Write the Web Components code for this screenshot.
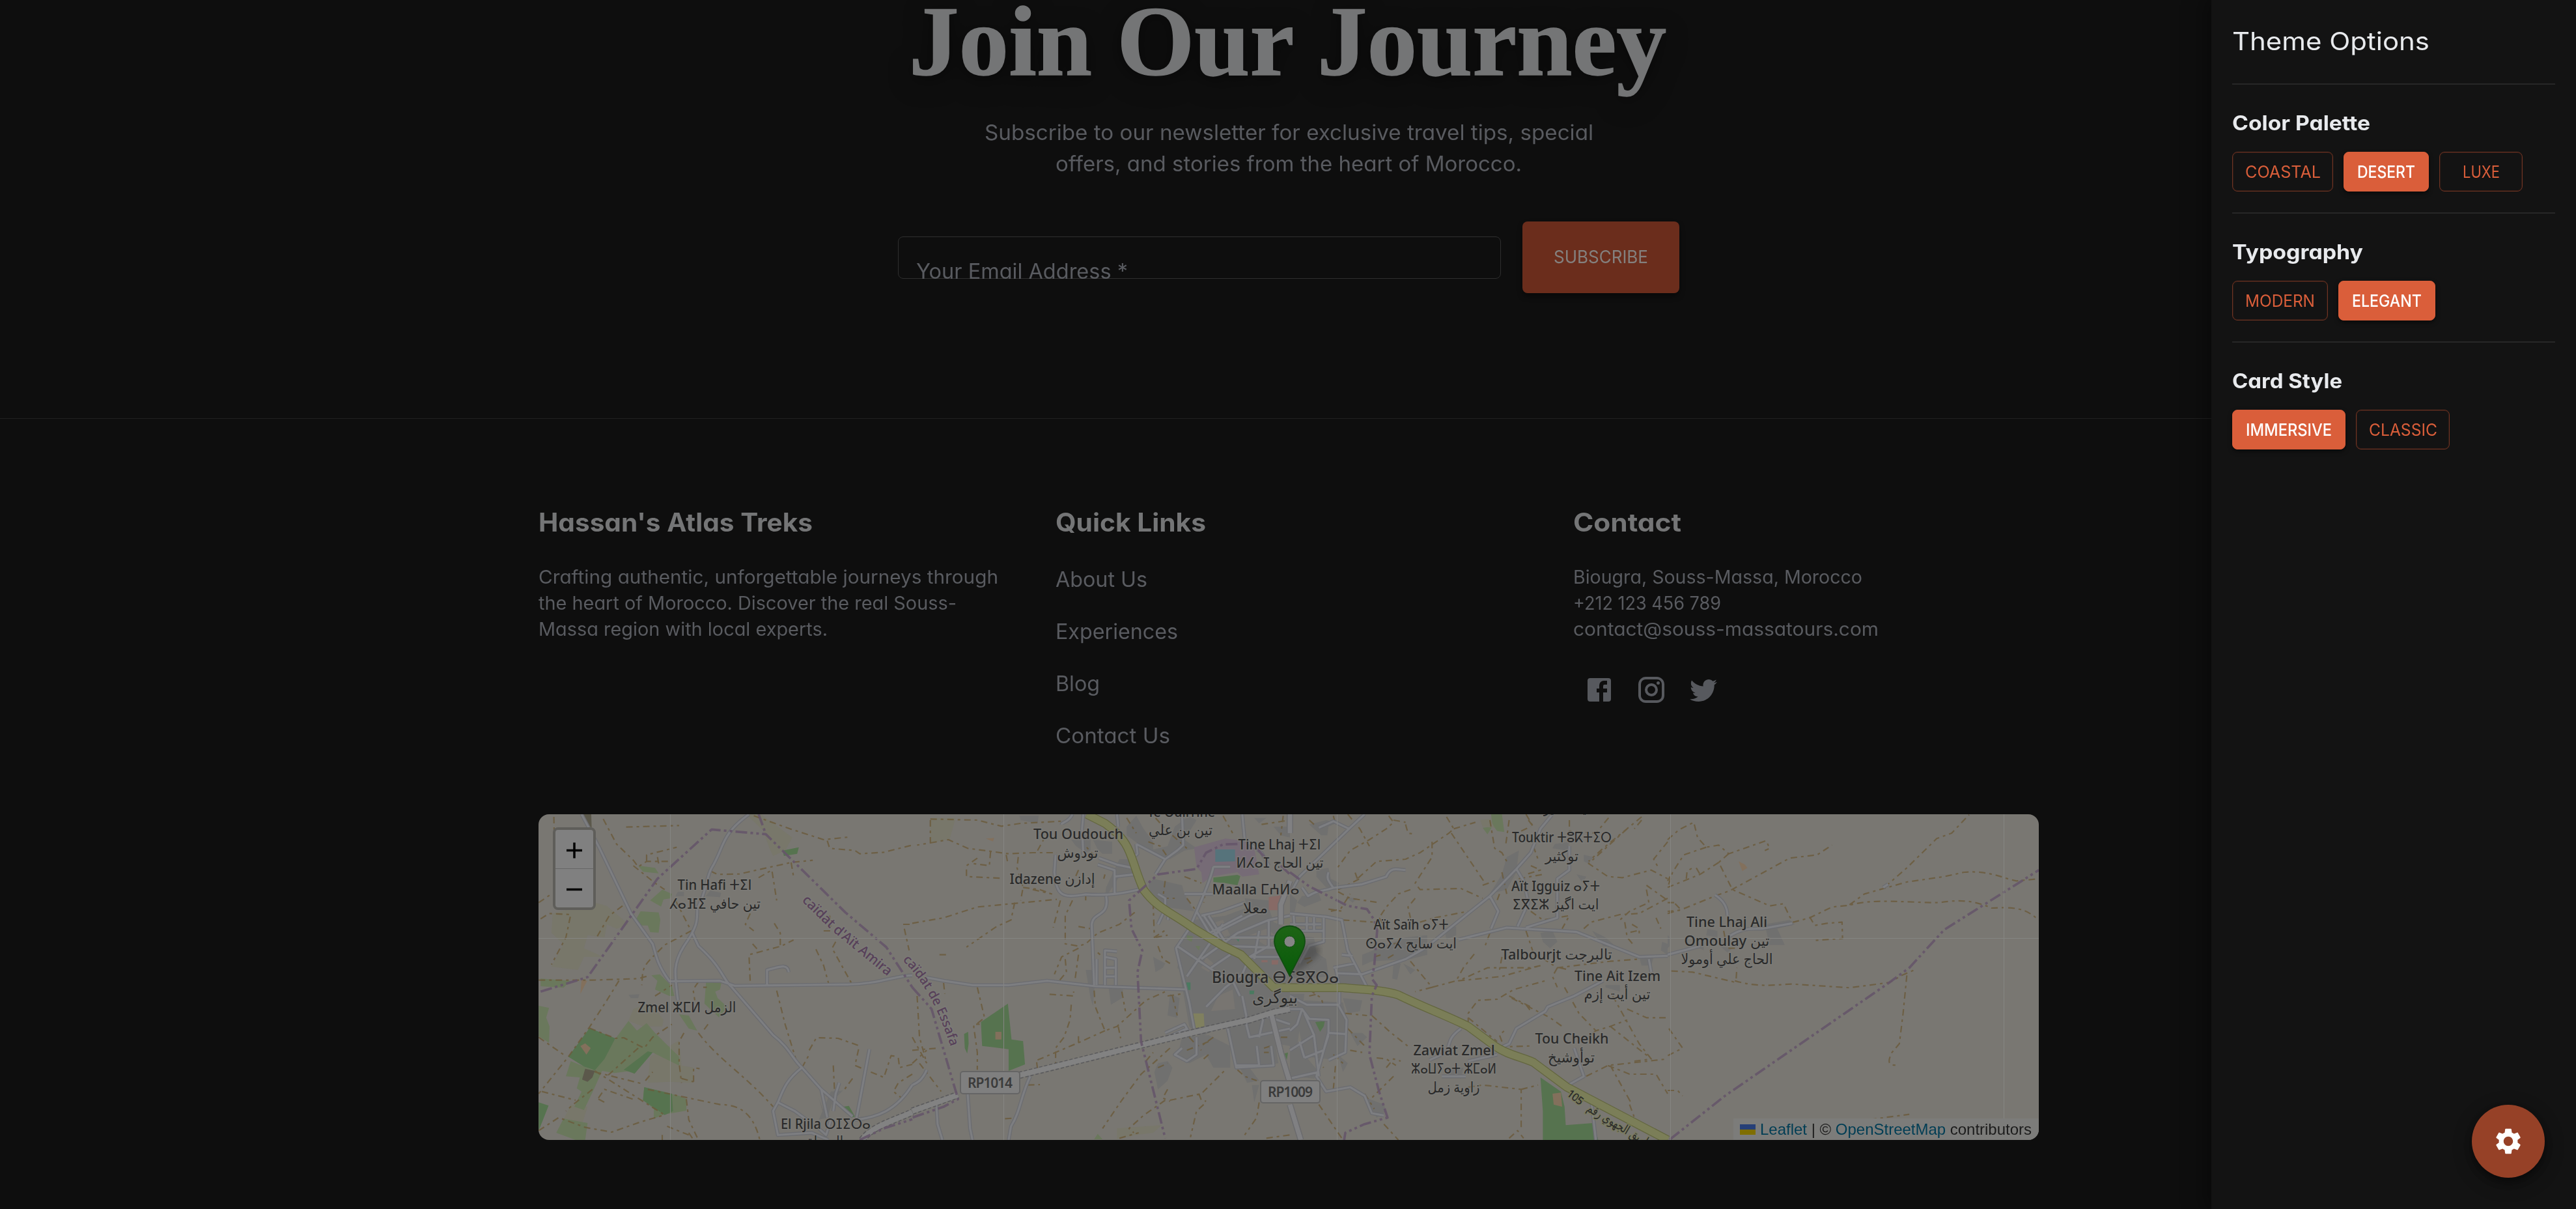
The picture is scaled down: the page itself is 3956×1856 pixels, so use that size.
<!DOCTYPE html>
<html lang="en">
<head>
<meta charset="utf-8">
<title>Hassan's Atlas Treks</title>
<style>
html,body{margin:0;height:100%;background:#0e0e0e;overflow:hidden}
body{font-family:Inter,"Open Sans","Noto Sans",sans-serif;font-feature-settings:"cv11" 1;color:#595b60}
</style>
</head>
<body>
<tour-page></tour-page>
<script>
const define = (name, html, after) => customElements.define(name, class extends HTMLElement {
  constructor() {
    super();
    const t = document.createElement('template');
    t.innerHTML = html;
    this.attachShadow({ mode: 'open' }).append(t.content.cloneNode(true));
    if (after) after(this.shadowRoot, this);
  }
});

/* ---------- page ---------- */
define('tour-page', `
<style>
:host{display:flex;position:relative;width:3956px;height:1856px;overflow:hidden}
main{flex:1;display:flex;flex-direction:column;min-width:0}
theme-drawer{position:absolute;top:0;right:0;bottom:0}
settings-fab{position:absolute;right:48px;bottom:48px}
</style>
<main><newsletter-section></newsletter-section><site-footer></site-footer></main>
<theme-drawer></theme-drawer>
<settings-fab></settings-fab>`);

define('newsletter-section', `
<style>
:host{display:flex;flex-direction:column;align-items:center;height:642px;flex:none;padding-left:2px}
h2{margin:-26px 3px 0 0;font:bold 153px/180px "Liberation Serif",serif;color:#747576;-webkit-text-stroke:1.500px #747576;text-shadow:0 8px 40px rgba(0,0,0,.4),0 4px 16px rgba(0,0,0,.25)}
p{margin:26px 0 0;font-size:32px;line-height:48px;text-align:center}
form{display:flex;align-items:center;gap:33px;width:1200px;margin-top:64px}
.field{flex:1;height:65px;box-sizing:border-box;border:1px solid #2e2e2e;border-radius:8px;padding:30px 27px 0}
.field label{display:block;height:36px;overflow:hidden;font-size:32px;line-height:46px}
button{width:241px;height:110px;border:0;border-radius:8px;background:#6b2d1c;color:#84807e;font:400 27px/40px Inter,sans-serif;box-shadow:0 5px 8px rgba(0,0,0,.4);padding:0}
</style>
<h2><fit-text w="1163">Join Our Journey</fit-text></h2>
<p><fit-text w="935">Subscribe to our newsletter for exclusive travel tips, special</fit-text><br><fit-text w="716">offers, and stories from the heart of Morocco.</fit-text></p>
<form><div class="field"><label><fit-text w="325">Your Email Address *</fit-text></label></div><button type="button"><fit-text w="145">SUBSCRIBE</fit-text></button></form>`);

define('site-footer', `
<style>
:host{display:block;border-top:1px solid #212121;padding:129px 0 0 1px}
.wrap{width:2304px;margin:0 auto}
.cols{display:grid;grid-template-columns:repeat(3,1fr);gap:80px;align-items:start}
p{margin:0;font-size:28px;line-height:40px}
nav{display:flex;flex-direction:column;gap:32px;margin-top:2px;font-size:32px;line-height:48px}
.social{display:flex;margin-top:33px}
.social span{width:48px;height:48px;padding:16px}
svg{display:block;width:48px;height:48px;fill:#57595e}
region-map{margin-top:96px}
</style>
<div class="wrap"><div class="cols">
<footer-column><fit-text slot="title" w="421">Hassan's Atlas Treks</fit-text>
<p><fit-text w="706">Crafting authentic, unforgettable journeys through</fit-text><br><fit-text w="642">the heart of Morocco. Discover the real Souss-</fit-text><br><fit-text w="444">Massa region with local experts.</fit-text></p></footer-column>
<footer-column><fit-text slot="title" w="231">Quick Links</fit-text>
<nav><a><fit-text w="141">About Us</fit-text></a><a><fit-text w="188">Experiences</fit-text></a><a><fit-text w="68">Blog</fit-text></a><a><fit-text w="176">Contact Us</fit-text></a></nav></footer-column>
<footer-column><fit-text slot="title" w="166">Contact</fit-text>
<p><fit-text w="444">Biougra, Souss-Massa, Morocco</fit-text><br><fit-text w="227">+212 123 456 789</fit-text><br><fit-text w="469">contact@souss-massatours.com</fit-text></p>
<div class="social">
<span><svg viewBox="0 0 24 24"><path d="M19 3a2 2 0 0 1 2 2v14a2 2 0 0 1-2 2H5a2 2 0 0 1-2-2V5a2 2 0 0 1 2-2h14m-1 2h-2.500a3.500 3.500 0 0 0-3.500 3.500V11h-2v3h2v7h3v-7h3v-3h-3V9a1 1 0 0 1 1-1h2V5z"/></svg></span>
<span><svg viewBox="0 0 24 24"><path d="M7.800 2h8.400C19.400 2 22 4.600 22 7.800v8.400a5.800 5.800 0 0 1-5.800 5.800H7.800C4.600 22 2 19.400 2 16.200V7.800A5.800 5.800 0 0 1 7.800 2m-.2 2A3.600 3.600 0 0 0 4 7.600v8.800C4 18.390 5.610 20 7.600 20h8.800a3.600 3.600 0 0 0 3.600-3.600V7.600C20 5.610 18.390 4 16.400 4H7.600m9.650 1.500a1.250 1.250 0 0 1 1.250 1.250A1.250 1.250 0 0 1 17.250 8 1.250 1.250 0 0 1 16 6.750a1.250 1.250 0 0 1 1.250-1.250M12 7a5 5 0 0 1 5 5 5 5 0 0 1-5 5 5 5 0 0 1-5-5 5 5 0 0 1 5-5m0 2a3 3 0 0 0-3 3 3 3 0 0 0 3 3 3 3 0 0 0 3-3 3 3 0 0 0-3-3z"/></svg></span>
<span><svg viewBox="0 0 24 24"><path d="M22.460 6c-.77.350-1.600.580-2.460.690.880-.530 1.560-1.370 1.880-2.380-.830.500-1.750.850-2.720 1.050C18.370 4.500 17.260 4 16 4c-2.350 0-4.270 1.920-4.270 4.290 0 .340.040.670.110.980C8.280 9.090 5.110 7.380 3 4.790c-.370.630-.580 1.370-.580 2.150 0 1.490.750 2.810 1.910 3.560-.710 0-1.370-.200-1.950-.500v.030c0 2.080 1.480 3.820 3.440 4.210a4.220 4.220 0 0 1-1.930.070 4.280 4.280 0 0 0 4 2.980 8.521 8.521 0 0 1-5.330 1.840c-.340 0-.680-.020-1.020-.060C3.440 20.290 5.700 21 8.120 21 16 21 20.330 14.460 20.330 8.790c0-.190 0-.370-.010-.560.840-.600 1.560-1.360 2.140-2.230z"/></svg></span>
</div></footer-column>
</div><region-map></region-map></div>`);

define('footer-column', `
<style>
:host{display:block}
h6{margin:0 0 34px;font-size:39px;line-height:60px;font-weight:700;color:#747576}
</style><h6><slot name="title"></slot></h6><slot></slot>`);

/* ---------- theme drawer ---------- */
define('theme-drawer', `
<style>
:host{display:block;width:560px;box-sizing:border-box;background:#131313;padding:0 32px;box-shadow:0 0 36px 6px rgba(0,0,0,.45);color:#e8eaed}
h5{margin:0;height:130px;padding-top:33px;box-sizing:border-box;font-size:38.500px;font-weight:400;line-height:61px;border-bottom:2px solid #272727}
</style>
<h5><fit-text w="303">Theme Options</fit-text></h5>
<option-group><fit-text slot="title" w="212">Color Palette</fit-text><theme-choice style="width:155px"><fit-text w="116">COASTAL</fit-text></theme-choice><theme-choice on style="width:131px"><fit-text w="89">DESERT</fit-text></theme-choice><theme-choice style="width:128px"><fit-text w="57">LUXE</fit-text></theme-choice></option-group>
<option-group><fit-text slot="title" w="201">Typography</fit-text><theme-choice style="width:147px"><fit-text w="107">MODERN</fit-text></theme-choice><theme-choice on style="width:149px"><fit-text w="107">ELEGANT</fit-text></theme-choice></option-group>
<option-group last><fit-text slot="title" w="169">Card Style</fit-text><theme-choice on style="width:174px"><fit-text w="132">IMMERSIVE</fit-text></theme-choice><theme-choice style="width:144px"><fit-text w="105">CLASSIC</fit-text></theme-choice></option-group>`);

define('option-group', `
<style>
:host{display:block;box-sizing:border-box;height:198px;padding-top:35px;border-bottom:2px solid #272727}
:host([last]){border-color:transparent}
h6{margin:0 0 20px;font-size:31px;line-height:48px;font-weight:700}
div{display:flex;gap:16px}
</style><h6><slot name="title"></slot></h6><div><slot></slot></div>`);

define('theme-choice', `
<style>
:host{display:flex;align-items:center;justify-content:center;box-sizing:border-box;height:61px;flex:none;border:1px solid #6f3423;border-radius:8px;color:#da5e3a;font-size:25px;line-height:46px;box-shadow:inset 0 0 0 1px #2c1a15}
:host([on]){background:#da5e3a;border-color:#da5e3a;color:#fff;font-weight:500;box-shadow:0 3px 6px rgba(0,0,0,.5)}
</style><slot></slot>`);

define('settings-fab', `
<style>
:host{display:flex;align-items:center;justify-content:center;width:112px;height:112px;border-radius:50%;background:#964127;box-shadow:0 6px 12px rgba(0,0,0,.35),0 8px 30px rgba(0,0,0,.3)}
svg{width:48px;height:48px;fill:#fff}
</style>
<svg viewBox="0 0 24 24"><path d="M19.140 12.940c.040-.300.060-.610.060-.940 0-.320-.020-.640-.070-.940l2.030-1.580c.180-.140.230-.410.120-.610l-1.920-3.320c-.120-.220-.370-.290-.590-.220l-2.390.960c-.500-.380-1.030-.700-1.620-.940l-.360-2.540c-.040-.240-.240-.410-.480-.410h-3.840c-.240 0-.430.170-.470.410l-.360 2.540c-.590.240-1.130.570-1.620.940l-2.390-.960c-.220-.080-.470 0-.590.220L2.740 8.870c-.120.210-.080.470.120.610l2.030 1.580c-.050.300-.090.630-.090.940s.020.640.070.940l-2.030 1.580c-.180.140-.230.410-.120.610l1.920 3.320c.120.220.370.290.590.220l2.390-.960c.500.380 1.030.700 1.620.940l.360 2.540c.050.240.240.410.480.410h3.840c.240 0 .440-.170.470-.410l.360-2.540c.590-.240 1.130-.560 1.620-.940l2.390.960c.220.080.470 0 .590-.220l1.920-3.320c.120-.220.070-.470-.120-.610l-2.010-1.580zM12 15.600c-1.980 0-3.600-1.620-3.600-3.600s1.620-3.600 3.600-3.600 3.600 1.620 3.600 3.600-1.620 3.600-3.600 3.600z"/></svg>`);

/* ---------- map ---------- */
/* Each sheet of the map keeps its own survey grid; m places it on the map. */
const sheets = [
{ m:'translate(-6 -11) scale(.3699 .33333)', s:[
['y','M880 33L940 33 1070 140 1040 200 990 225 975 190 950 110ZM75 490L250 440 300 455 390 540 340 560 300 540 290 600 220 590 205 650 285 690 205 690 180 750 70 735 120 630 70 580ZM410 930L480 900 535 980 530 1010 450 1010 390 985ZM480 1150L600 1075 610 1190 660 1200 655 1270 560 1265 470 1270ZM150 1370L220 1380 200 1450 120 1440Z'],
['f','M200 33L235 33 237 95 222 85Z'],
['g','M430 270L500 280 515 305 450 298ZM480 430L530 380 570 400 565 420 535 425 525 458ZM440 480L515 485 522 520 515 578 480 576 470 545 440 545 420 520ZM25 790L150 800 120 832 25 825ZM485 775L520 770 570 825 580 870 560 870 500 840 510 800ZM712 805L775 810 770 840 750 850 760 880 800 920 765 968 705 905ZM600 955L640 960 675 1030 640 1020ZM17 915L60 925 48 970 62 1010 60 1085 17 1055ZM390 985L425 1030 465 995 500 1040 600 1150 600 1190 490 1130 440 1160 400 1215 330 1225 280 1215 250 1290 205 1395 165 1380 195 1310 175 1295 188 1245 130 1240 150 1170 240 1210 340 1060ZM455 1290L600 1330 630 1345 630 1398 540 1415 495 1435 495 1390 450 1350ZM120 1435L220 1455 210 1533 170 1533 90 1500Z'],
['G','M1030 200L1097 185 1090 215 1035 225ZM228 1018L335 1065 290 1160 250 1212 205 1195 140 1150ZM470 1125L490 1130 415 1228 370 1210ZM455 1290L570 1320 575 1400 540 1418 450 1350ZM17 1360L58 1375 35 1440 17 1490ZM1280 1380L1305 1376 1330 1425 1315 1430Z'],
['o','M190 1100L210 1088 233 1110 215 1140ZM195 795L218 800 190 860Z'],['f','M210 1205L250 1215 240 1245 220 1265 197 1255Z'],
['u','M595 390L620 390 620 410 585 410ZM730 385L775 395 770 415 710 410ZM390 865L435 862 430 880 400 880ZM1230 1310L1280 1305 1240 1350 1215 1430 1180 1440ZM1180 1340L1200 1400 1205 1440Z'],
['r','M195 33L270 190 400 490 490 630C505 680 505 720 560 802L770 800 830 823 1300 817C1430 815 1500 775 1568 775M890 33C770 130 790 180 735 280 710 330 720 370 675 470 675 520 680 545 620 640 575 720 580 760 595 890M655 580L680 640C780 740 780 790 815 825L990 1050C1060 1110 1070 1160 1110 1200L1190 1300 1320 1425M1110 1200C1040 1260 1030 1310 1010 1360L990 1400 1010 1510 1150 1500 1220 1533M1010 1360L1080 1400 1130 1440M1190 1300L1215 1430M1240 1400L1250 1320 1265 1270M1335 1440L1390 1115M965 820L965 750C1010 740 1050 715 1055 760M1230 1440L1210 1510 1180 1480M1330 1440C1420 1430 1500 1400 1568 1280'],
['t','M80 45L82 180M285 55L340 170 410 245 430 275 465 250 570 250M410 270L500 350 540 380M380 92L600 85M465 250L465 220 590 185M510 230L515 260M17 440L70 400M25 515L60 490 150 495 130 600 70 725M365 455L310 500 255 605M585 430L650 570 540 635 500 680C440 740 450 760 445 820M17 797L240 797 430 790 480 775M350 800L300 890 230 1010 140 1150 17 1320M680 805L658 840 665 890M1005 845L1040 1000 1090 1180M895 490L875 540 910 570M895 800L890 680 1025 640 1075 612M905 630L925 655M995 535L1020 580 1020 645M730 295L760 310 850 308 1065 255 1155 245M930 325L985 290 1005 430M910 40L1060 100 1200 150 1305 138M1215 155L1225 190 1330 200 1350 215 1450 208 1568 175M1065 255L1075 320M1200 570L1230 570 1225 500M1168 655L1200 730 1220 810M1250 620L1235 650 1315 810M1530 540L1568 540M1535 560L1555 660M17 1060L120 1140M228 1018L335 1065 370 1062 455 1110 490 1060 570 1000M430 1110L300 1240M250 1215L540 1418M250 1220L450 1275M460 1260L490 1220M680 1040C760 1160 880 1240 990 1380M620 1040L600 1080 600 1180 610 1270M660 1265L660 1200 685 1205M610 1250L660 1265M30 1310L170 1350M240 1300L160 1370 130 1400M265 1340L290 1300 420 1350M265 1345L300 1365M470 1300L640 1340 770 1370C860 1370 910 1420 935 1533M630 1345L640 1440 680 1533M17 1490L100 1430 210 1475 320 1497 440 1450 540 1418M550 1470L640 1510M530 1510L530 1533M1140 1120L1170 1062 1260 1065 1350 1100M1345 1115L1330 1190 1450 1245 1480 1145 1510 1150M1510 1155L1515 1200 1568 1185M1110 1200L1140 1140M1240 1190L1245 1300M1320 1250L1280 1310M1568 1230L1510 1270 1490 1310 1530 1345M640 1500L660 1533M500 870L570 820M700 830L715 830M720 1000L700 1030'],
['b','M25 850L220 783 510 330 735 103 960 125 1290 485 1460 645 1568 830M930 33L960 125M1350 1533L1450 1480 1568 1438'],
['x','M1360 1533C1400 1470 1490 1445 1568 1405']]},
{ m:'translate(574 -11) scale(.3699 .33333)', s:[
['y','M75 50L180 50 155 148 75 165ZM850 1480L1035 1465 1000 1500 930 1510 850 1530ZM1540 500L1568 500 1568 540 1540 540Z'],
['u','M445 40L525 40 520 75 450 60ZM660 150L690 150 700 110 740 150 740 200 720 210 680 180ZM750 150L830 160 830 215 790 215 770 195ZM890 90L930 40 960 100 1000 160 1000 220 890 130ZM1090 90L1150 40 1180 60 1130 150 1180 190 1130 200 1070 240 980 200 1060 180ZM860 240L930 240 930 310 860 320 800 420 805 370ZM1000 330L1120 360 1130 400 1170 480 1050 460 1000 430 980 360ZM1150 560L1200 600 1350 670 1470 830 1460 900 1200 1060 1150 1010 1100 700 1090 650ZM1000 690L1050 720 1040 740 1010 760ZM720 750L760 750 760 790 750 915 740 880ZM815 830L875 840 870 880 825 910ZM1070 860L1110 880 1100 970 1060 960ZM1170 520L1300 500 1470 430 1500 530 1568 560 1568 1100 1460 1080 1400 1130 1340 1200 1300 1010 1150 1050 1240 900 1100 740 1150 560ZM1230 940L1370 940 1390 960 1240 1010ZM1120 1060L1230 1050 1320 1100 1320 1200 1250 1200 1220 1140 1150 1180 1100 1150ZM1340 1070L1500 1040 1520 1180 1400 1200 1340 1200ZM1360 1200L1400 1200 1440 1260 1390 1270ZM1020 1180L1060 1170 1080 1200 1060 1260 1020 1300 1005 1220ZM1410 1280L1440 1280 1420 1360ZM1380 420L1480 430 1480 480 1400 510ZM1420 50L1470 50 1440 75ZM1500 90L1568 90 1568 140 1530 130Z'],
['c','M1220 690L1260 730 1230 760 1200 740ZM1270 870L1330 840 1340 930 1240 940ZM1400 590L1470 560 1520 600 1470 640ZM1230 540L1290 520 1320 590 1260 610Z'],
['p','M1170 185L1300 145 1380 155 1420 190 1440 310 1370 320 1350 300 1240 320 1205 350 1200 300 1180 275Z'],
['w','M1258 195L1340 195 1340 250 1258 252Z'],
['G','M1250 325L1350 312 1362 318 1350 360 1300 350 1250 345ZM397 905L412 1070 460 1078 468 1185 400 1215 400 1115 290 1100 285 990ZM215 1045L232 1035 234 1090 228 1135 218 1110ZM1545 1135L1560 1130 1555 1165Z'],
['g','M1140 590L1165 595 1160 620 1140 610ZM1175 640L1195 640 1190 660ZM755 1530L770 1505 790 1530Z'],['q','M1132 808L1155 808 1155 842 1132 842ZM1400 845L1420 845 1418 862 1400 862ZM1340 602L1358 602 1355 620Z'],
['k','M1480 415L1535 405 1525 475 1480 475ZM1450 705L1475 705 1475 715 1450 715ZM1492 705L1520 705 1518 725 1492 725Z'],['o','M305 145L340 142 335 158ZM345 1035L370 1035 370 1070 345 1070Z'],['h','M1160 950L1210 950 1213 1010 1170 1020Z'],
['r','M665 33C650 70 620 70 620 80M710 33L705 100 710 220M850 33L855 90M930 170L935 215 900 250M930 170L1050 240 1010 310M1050 240L1100 200 1125 175 1120 33M595 220L590 300C600 410 620 420 720 402 820 410 880 395 950 378M770 265L840 290 840 400M775 235L850 265 915 280M840 320L920 310M1370 33L1380 150 1450 210 1480 270M805 410C820 510 750 480 745 540L755 820M765 700L765 820M800 820L800 660 850 665M800 690L845 700 845 820M800 740L840 740M800 780L840 780M60 785L130 800 250 820 400 820 560 800 760 825 1140 840M1250 275L1320 275M1250 275C1240 330 1200 430 1150 560L1095 650 1110 720 1150 900 1170 1020M1100 640L1300 790M1180 480L1240 590 1400 500 1470 470M1200 500L1280 480 1380 440M1140 780L1290 540M1200 600L1370 500M1200 700L1350 580 1480 520 1568 500M1240 740L1320 680M1210 500L1300 650M1230 500L1310 640M1400 690L1568 690M1480 520L1480 640 1400 690 1370 770 1300 830 1220 920M1440 570L1420 700M1360 870L1330 800M1310 1020L1345 1200 1500 1190 1490 1100M1345 1190L1440 1190 1430 1100M1180 1060L1180 1140 1140 1170 1090 1140 1120 1110M1380 970L1400 1060 1568 1020M1440 1060L1460 960 1568 1000M1370 870L1390 980M1050 1040L1130 1000 1150 1040M1060 1060L1140 1020M1020 400L1050 420 1050 470 1020 540M1070 470L1060 520M1320 600L1568 600M1310 640L1568 650M60 1210C40 1260 20 1270 0 1280M100 1370L105 1460 125 1533M230 1320L240 1480 250 1533M490 1240C450 1330 450 1400 410 1470L400 1533M1130 400L1250 400'],
['R','M1568 340L1530 450 1530 540M1490 950L1530 1130 1568 1270'],
['t','M75 55L270 60 370 88 450 75 620 65M75 60L75 165 20 175M75 165L150 150 230 190 300 200 400 215 500 210 600 210M520 200L545 150M325 205L320 270 250 260M270 235L225 270 225 320 380 328M440 230L435 280 460 370 450 430M390 220L395 250M0 535L130 510 270 460 600 425M425 440L410 520 350 550 225 645M460 370L530 380 590 405M500 380L580 400M615 430L585 555M665 430L635 500 635 630 690 640 720 630 770 580 860 540 935 475M690 550L740 560M690 650L620 690 590 770M635 700L640 760 610 800M690 680L675 800M1000 440L1005 600 1060 560M1020 640L1040 700 1070 720M1010 600L1060 590M720 400L720 430M800 310L795 330M690 290L670 340M980 160L1030 180 1060 230M1010 50L1050 100M1080 130L1140 190M890 50L930 120M1290 40L1330 120M1130 320L1200 350M1050 340L1040 420 1090 420M1140 420L1180 480M1220 360L1210 440M130 810L135 860M270 830L300 970 255 1010 270 1130 270 1210M280 1000L265 1000M570 862L670 870 670 850M755 845L760 920 800 1030 850 1010 970 890 1050 850M870 850L885 940M660 910L655 980 630 1060 595 1110 595 1190M520 1165L690 1085 800 1030M690 1085L690 1050M855 1010L865 1065M520 1205L515 1165M480 1280L530 1278M385 1435L415 1433M0 1060L60 1180M0 1180L60 1120M0 1120L110 1110M30 1180L120 1310M20 870L30 1060 60 1180M1070 1110L950 1230 870 1350 790 1480M970 1170L1000 1130M1070 1350L1200 1320 1300 1210M1060 1300L1040 1340 1070 1355M1190 1320L1200 1350 1220 1355M1050 1350L960 1420 900 1480 920 1500M1210 1370L1180 1400 1155 1520M860 1525L940 1500M1440 1360L1430 1430 1380 1510M1470 1525L1568 1510M1080 870L1100 960M1060 870L1120 860M1150 1060L1200 1120M1250 1060L1200 1100M1140 1120L1230 1080M1230 1140L1200 1170M1020 1200L1060 1180M1350 1210L1380 1240 1430 1260M1460 1110L1490 1100M1460 1130L1480 1130M1530 1060L1568 1060M1540 40L1530 130M1450 80L1568 60M760 230L720 180M140 680L100 680M780 680L770 670'],
['b','M0 830L80 930 190 1345 130 1380 0 1430M1350 170L1290 172 1220 210 1180 285 1020 310 900 430 910 560 955 660 935 760 950 1080 1050 1525M1430 190L1470 240M1530 270L1568 310'],
['Y','M725 33L800 75C920 170 900 230 960 380 1020 470 1070 480 1170 560L1290 640 1365 680 1500 830 1568 832'],
['X','M0 1400L190 1325M445 1235C800 1140 1100 1050 1400 980L1500 945 1568 930']]},
{ m:'translate(1154 -11) scale(.3699 .33333)', s:[
['u','M80 80L150 60 200 70 160 90 155 130 130 130ZM110 290L160 280 170 330 205 350 190 370 150 370 110 320ZM50 410L120 400 130 430 60 460 30 440ZM230 415L280 420 260 440ZM640 560L690 550 690 590 650 610ZM300 680L480 600 570 590 570 680 500 700 340 710 300 730ZM430 720L460 720 445 795 425 790ZM470 720L520 750 500 770ZM900 230L950 200 940 300 900 380 830 400 880 310ZM1040 580L1090 570 1110 620 1080 650 1050 620ZM1255 570L1310 600 1360 650 1300 640ZM1450 690L1510 690 1500 730 1460 730ZM0 400L30 430 20 480 0 500ZM0 590L100 600 110 670 150 700 160 780 60 790 0 790ZM180 740L270 720 320 830 210 830ZM60 890L220 900 240 1000 230 1120 160 1160 60 1150 30 980ZM220 880L300 890 290 940 240 950ZM250 1040L300 1040 320 1060 280 1100ZM200 1140L240 1180 220 1220ZM320 1340L390 1370 400 1400 360 1430 330 1380ZM1190 310L1230 320 1215 350ZM1220 220L1260 230 1240 260 1220 250ZM0 860L60 860 30 1100 120 1220 100 1250 0 1240ZM1100 170L1160 160 1150 200 1090 190ZM650 1200L720 1200 710 1250 650 1230ZM1310 820L1370 820 1370 850 1310 830ZM1545 620L1568 630 1568 680 1540 660Z'],
['g','M800 95L840 90 820 125ZM835 33L880 33 890 115 860 110 840 80Z'],['y','M790 60L830 55 850 95 800 90Z'],
['G','M1040 1245L1125 1310 1140 1380 1145 1465 1260 1455 1280 1533 1050 1533 1050 1400ZM105 990L145 985 140 1010 125 1035Z'],['o','M1090 1320L1125 1315 1130 1380 1095 1370Z'],
['r','M310 33L245 100 40 320 0 400M120 95L180 65 245 100M160 300C150 330 160 340 180 372L300 355 400 320C420 270 450 290 480 290M180 372C130 390 120 380 75 410L50 370M1090 33L1040 100 1000 210 940 285 830 410 740 490 560 650 480 700 300 770 190 765M940 285L970 340 990 440 945 550M830 410L865 480 835 560M700 610L900 555 1190 575 1450 690 1568 685M980 555L1110 510 1110 330 1160 290 1160 180M1490 700L1500 760M1300 800L1180 870 1070 920 1060 940 940 1020 910 1090 870 1110M1180 1110L1220 1240 1155 1280M710 1020C660 1060 665 1080 650 1130L580 1165M0 490L150 505 215 520 240 660 320 830M15 500L20 570 140 570M140 510L140 620 80 640 40 720M0 540L130 540M70 500L70 570M100 500L100 570M215 680L260 685M180 740L270 720M190 740L205 830 205 910M0 870L70 910 200 910 235 980 230 1130 160 1165M0 930L50 930 80 975 160 980 160 1040 110 1240 150 1310 250 1290 310 1330 340 1410 390 1420M160 1040L230 1045M50 930L30 1000 0 1030M60 950L100 1050 0 1120M60 1155L140 1120 160 1050M100 1050L120 1240M60 1155L40 1080M120 1220L0 1250M1250 1340L1270 1533M630 1240L730 1240M740 1170L860 1140M830 1060L820 1070'],
['R','M0 33L0 120M0 1370L45 1533'],
['t','M240 33L290 100 330 180M410 40L430 70 400 100 330 150 250 200 190 290M430 60L480 70M480 80L490 120 520 125M650 45L680 100 660 120 540 210 480 240 360 250 280 330M670 120L810 350M590 160L590 230 520 350 540 380 710 375 800 420M680 100L770 70M830 60L850 190 880 210 900 250M910 60L895 180M980 33L1010 90M1160 60L1160 110 1270 120 1330 40M1460 45L1300 190 1240 250M1400 100L1240 260 1320 320 1380 325 1500 290 1568 330M1568 160L1510 240 1530 280M1460 60L1430 100M1480 380L1490 440 1410 480 1370 520M1480 360L1568 430M520 420L490 460 500 510M500 380L450 400 400 460 370 510M220 520L350 530M160 470L220 480M370 510L400 560M600 510L740 480M540 530L600 510M1000 480L1050 520 1160 500 1130 560M1220 560L1250 530 1370 495 1450 490 1568 420M1390 530L1400 600 1430 640M1420 540L1450 560 1450 590M1520 510L1540 560M1440 570L1400 580M980 570L1010 670 1110 740 1330 710 1450 700M1110 740L1090 780 1110 830M1120 740L1160 750M1040 730L1000 740 820 740 700 800 880 780 1040 730M830 580L810 640M880 690L870 750M500 710L590 830 520 850M590 830L690 800 720 740 770 670M430 680L400 700M350 690L380 680M740 1000L740 950 780 890 860 885 930 840 1060 800M910 870L1000 920M920 880L1080 970 1130 1010M980 910L1000 940M740 970L860 1080M880 1080L870 1050 900 1020M870 1105L1000 1100M360 1155L400 1160 440 1190M400 1200L430 1160 460 1170M340 960L420 1040 500 1110M230 950L320 960M240 1020L310 1100M250 1120L300 1130M430 1240L330 1350M740 1290L800 1280 960 1300 960 1480M960 1300L1030 1280M910 1525L945 1490 970 1525M1140 830L1200 950 1270 1030 1330 1010 1400 980M1270 1030L1250 1050M1330 1010L1500 1160M1340 870L1450 1090 1500 1160 1430 1170M1400 930L1480 970 1568 970M1230 1240L1320 1190 1568 1160M1330 1190L1400 1330M1320 1190L1410 1230 1520 1230 1568 1320M1400 1330L1420 1370M1410 1370L1440 1460 1470 1460M1190 1360L1240 1350M180 40L190 80M80 60L100 80M200 380L290 330M280 330L270 300M200 390L250 420 370 440M170 480L210 470 250 400M80 840L130 880 140 920M80 870L120 860M110 1160L140 1200M180 1140L230 1190M180 1300L190 1180M310 1320L350 1390M120 1370L220 1533M390 1460L450 1533M60 700L100 690M70 720L100 700M430 630L470 620M1000 270L1040 290 980 310M1010 180L1030 240M990 60L1010 90M960 110L1000 90M950 330L1050 310M870 400L850 460M800 360L850 340M880 300L900 400'],
['b','M0 300L80 365 240 455 320 470 350 520 362 570 350 730 340 790 360 820 340 870 330 1140 370 1310 405 1430 310 1460 230 1500 225 1533'],
['Y','M0 832L220 832C290 840 380 840 450 865 550 920 650 960 740 1010L850 1100C900 1140 960 1150 1010 1175L1150 1290 1568 1533']]},
{ m:'translate(1734 -11) scale(.38265 .33333)', s:[
['u','M160 560L200 570 200 600 155 590ZM390 540L490 520 510 540 440 560 470 635 410 635 400 590ZM210 640L260 650 240 670ZM110 640L145 630 145 660ZM0 590L8 600 8 640 0 650Z'],['o','M285 250L310 265 320 280 300 295Z'],
['r','M0 680L130 640M240 600C300 555 330 560 380 560L500 535M190 405C225 430 240 460 240 500M865 370L885 355'],
['t','M0 150L45 105 105 70 120 140 155 185 205 175 245 215 395 155 410 190 390 200M155 185L65 220 20 300 0 370M245 215L205 255 260 380 410 455 465 445 490 505 505 530 570 510 660 460 730 452C820 420 960 440 1090 440 1190 420 1250 440 1300 465 1440 455 1450 490 1492 520M205 255L130 310 75 335 0 370M115 280L130 310M75 330L78 295 100 280M0 490L60 470 200 405 250 385 490 235 600 220 660 175M30 445L55 475 0 480M0 440L40 440M570 505L590 545 640 535 700 530 702 605 580 615M730 450L790 400 960 345 1110 320 1190 300C1290 290 1350 330 1400 340L1492 330M870 370L960 280 1080 145 1140 120 1210 35M15 755L100 760 265 805 275 790 278 740M270 800C370 835 450 815 500 815L730 832 890 808 940 775 1000 745M960 775L945 950 930 1090 900 1130C870 1200 910 1185 925 1190M5 1020L60 1110 0 1145M0 1305L40 1305 60 1330M225 570L230 600M270 650L240 650M745 1450L870 1430 970 1415M0 340L10 320'],
['b','M10 1530L230 1330 890 808 970 740 1110 565 1380 370 1490 290']]}
];

/* text, centre x, baseline, width, size */
const labels = [
['Tin Hafi ⵜⵉⵏ',270.500,116,114],['ⵃⴰⴼⵉ تين حافي',271,144.500,140],['Zmel ⵣⵎⵍ الزمل',228,304,151],['El Rjila ⵔⵊⵉⵔⴰ',441,483,138],['الرجيلة',440,510,56],
['Te Ouirrine',987,4,104],['تين بن علي',986,32,98],['Tou Oudouch',829,38,138],['تودوش',828,67,63],['Idazene إدازن',789,106.500,131],
['Tine Lhaj ⵜⵉⵏ',1138,54,127],['ⵍⵃⴰⵊ تين الحاج',1138.500,82,134],['Maalla ⵎⵄⵍⴰ',1101.500,123,134],['معلا',1101,152,38],
['Biougra ⴱⵢⵓⴳⵔⴰ',1131.500,259,195,25],['بيوگرى',1131,290,70,25],
['Touktir ⵜⵓⴽⵜⵉⵔ',1571.500,43,153],['توكثير',1571.500,72,51],['Aït Igguiz ⴰⵢⵜ',1562,118,136],['ⵉⴳⵉⵣ ايت اگيز',1562,146,133],
['Aït Saïh ⴰⵢⵜ',1340,177,115],['ⵙⴰⵢⵃ ايت سايح',1340,205.500,140],['Talbourjt تالبرجت',1563.500,223,170],
['Tine Ait Izem',1657,256,132],['تين أيت إزم',1656.500,284,102],['Tou Cheikh',1587,352,113],['توأوشيخ',1586,380.500,72],
['Zawiat Zmel',1406,370,125],['ⵣⴰⵡⵢⴰⵜ ⵣⵎⴰⵍ',1405.500,398,131],['زاوية زمل',1405.500,427,80],
['Tine Lhaj Ali',1825,173,124],['Omoulay تين',1825,202,131],['الحاج علي أومولا',1825,230,141],['آيت عميرة',1574,-2,80]
];

define('region-map', `
<style>
:host{display:block;position:relative;width:2304px;height:500px;border-radius:16px;overflow:hidden;background:#797772}
svg{display:block}
.map path{fill:none;vector-effect:non-scaling-stroke;stroke-linejoin:round}
.map .y{fill:#78776a}.map .g{fill:#6a785c}.map .G{fill:#56734f}.map .u{fill:#70706f}.map .c{fill:#787571}.map .p{fill:#766b76}.map .w{fill:#56737b}.map .o{fill:#83705c}.map .f{fill:#5b584b}.map .k{fill:#876a66}.map .h{fill:#80805f}.map .q{fill:#4a7a60}
.map .t{stroke:#6b5a3a;stroke-width:2.200;stroke-dasharray:10 6 4 6;opacity:.8}
.map .b{stroke:#66566a;stroke-width:3.700;stroke-dasharray:18 5 4 5 4 5;opacity:.9}
.map .rc{stroke:#6b6c70;stroke-width:5.800}.map .r{stroke:#7d7e81;stroke-width:3.200}
.map .Rc{stroke:#6b6b6d;stroke-width:10}.map .R{stroke:#808082;stroke-width:7}
.map .Yc{stroke:#63663f;stroke-width:13.500}.map .Y{stroke:#7b7e58;stroke-width:11}
.map .Xc{stroke:#5a5a5c;stroke-width:11;stroke-dasharray:5 3}.map .X{stroke:#828282;stroke-width:8}
.labels text{font-family:"Noto Sans","DejaVu Sans",sans-serif;font-size:22.500px;font-weight:500;fill:#2a2a2a;stroke:#7d7c78;stroke-width:3.500px;stroke-opacity:.7;paint-order:stroke;text-anchor:middle}
.labels .pur{fill:#574059}
.labels .ref{font-size:21px;font-weight:600;fill:#3b3b3b;stroke:none}
.zoom{position:absolute;left:22px;top:20px;width:58px;height:119px;border:4px solid #5f5e5a;border-radius:8px;background:#808080;display:flex;flex-direction:column;overflow:hidden}
.zoom svg{flex:1;width:58px;height:59px;stroke:#000;stroke-width:3.500}
.zoom svg+svg{border-top:1px solid #666}
.pin{position:absolute;left:1128px;top:170px}
.credit{position:absolute;right:0;bottom:0;height:33px;box-sizing:border-box;width:469px;padding:0 11px 0 10px;display:flex;align-items:center;gap:7px;background:#7c7c7a;font:24px/33px "Liberation Sans",sans-serif;color:#1c1c1c;font-feature-settings:normal}
.credit a{color:#003d54}
</style>
<svg class="map" width="2304" height="500" viewBox="0 0 2304 500"><g class="sheets"></g>
<path d="M202.500 0V500M714.500 0V500M1226.500 0V500M1738.500 0V500M2250.500 0V500M0 190.500H2304" stroke="#858582" stroke-width="1"/>
<g class="labels">
<rect x="648" y="395" width="91" height="34" rx="4" fill="#7f7f7f" stroke="#656565" stroke-width="2"/><text class="ref" x="693.500" y="420" textLength="69">RP1014</text>
<rect x="1109" y="409" width="91" height="34" rx="4" fill="#7f7f7f" stroke="#656565" stroke-width="2"/><text class="ref" x="1154.500" y="434" textLength="69">RP1009</text>
<path id="amira" d="M404 133L452 180 545 256"/><path id="essafa" d="M559 224C600 265 619 315 634 360"/>
<text class="pur" style="text-anchor:start;font-size:21px"><textPath href="#amira">caïdat d'Aït Amira</textPath></text>
<text class="pur" style="text-anchor:start;font-size:20px"><textPath href="#essafa">caïdat de Essafa</textPath></text>
<text style="text-anchor:start;font-size:17px;stroke:#7b7e58" transform="translate(1578 431) rotate(37)" textLength="27">105</text>
<text direction="rtl" style="font-size:19px;stroke:#7b7e58" transform="translate(1661 486) rotate(31)" textLength="122" lengthAdjust="spacingAndGlyphs">الطريق الجهوي رقم</text>
</g></svg>
<svg class="pin" width="100" height="84" viewBox="0 0 100 84"><defs><linearGradient id="pg" x2="0" y2="1"><stop stop-color="#1e6416"/><stop offset="1" stop-color="#075b08"/></linearGradient><filter id="blur"><feGaussianBlur stdDeviation="4"/></filter></defs>
<path d="M27 76L46 38C55 26 72 28 72 40 69 52 48 64 30 77Z" fill="#333" opacity=".42" filter="url(#blur)"/>
<path d="M25.500 1.500C12 1.500 2 12 2 25 2 31 4 36 7 42L25.500 78 44 42C47 36 49 31 49 25 49 12 39 1.500 25.500 1.500Z" fill="url(#pg)" stroke="#124d12" stroke-width="1.800"/><circle cx="25.500" cy="25.500" r="8.500" fill="#858585" stroke="#124d12"/></svg>
<div class="zoom"><svg viewBox="0 0 58 59"><path d="M17 31.500H41M29 19.500V43.500"/></svg><svg viewBox="0 0 58 59"><path d="M17 31.500H41"/></svg></div>
<div class="credit"><svg width="24" height="16" viewBox="0 0 24 16"><path fill="#263f77" d="M0 0h24v8H0z"/><path fill="#7f6e00" d="M0 8h24v8H0z"/></svg><fit-text w="417"><a>Leaflet</a> | © <a>OpenStreetMap</a> contributors</fit-text></div>`,
root => {
  const casing = { r: 'rc', R: 'Rc', Y: 'Yc', X: 'Xc' };
  const path = (c, d) => `<path class="${c}" d="${d}"/>`;
  const pass = test => sheets.map(({ m, s }) => `<g transform="${m}">` +
    s.map(([c, d]) => test(c === 'x' ? 'X' : c, d)).join('') + '</g>').join('');
  const lines = 'rRYXtb';
  root.querySelector('.sheets').innerHTML =
    pass((c, d) => lines.includes(c) ? '' : path(c, d)) +
    pass((c, d) => c === 't' ? path(c, d) : '') +
    pass((c, d) => c === 'r' ? path('rc', d) : '') + pass((c, d) => c === 'r' ? path('r', d) : '') +
    pass((c, d) => 'RYX'.includes(c) ? path(casing[c], d) : '') + pass((c, d) => 'RYX'.includes(c) ? path(c, d) : '') +
    pass((c, d) => c === 'b' ? path(c, d) : '');
  root.querySelector('.labels').insertAdjacentHTML('beforeend', labels.map(([t, x, y, w, f]) =>
    `<text x="${x}" y="${y}" textLength="${w}" lengthAdjust="spacingAndGlyphs"${f ? ` style="font-size:${f}px"` : ''}>${t}</text>`).join(''));
});

/* One line of text, its letters widened or narrowed to occupy the width w. */
customElements.define('fit-text', class extends HTMLElement {
  constructor() {
    super();
    this.attachShadow({ mode: 'open' }).innerHTML = '<style>:host{display:inline-block;white-space:nowrap;text-align:left;transform-origin:0 50%}</style><slot></slot>';
  }
  connectedCallback() {
    const w = +this.getAttribute('w'), own = this.getBoundingClientRect().width;
    this.style.width = own + 'px';
    this.style.marginRight = w - own + 'px';
    this.style.transform = `scaleX(${w / own})`;
  }
});
</script>
</body>
</html>
